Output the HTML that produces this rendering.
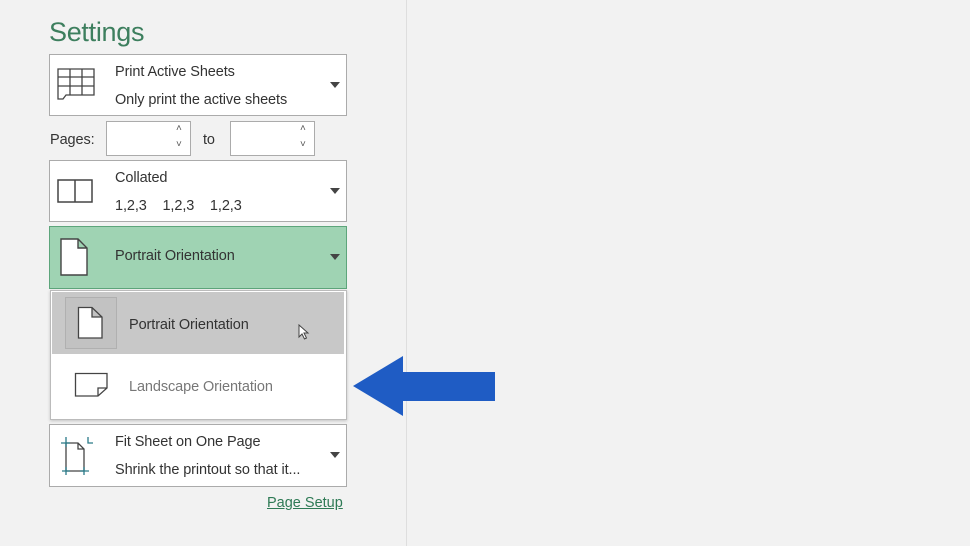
<!DOCTYPE html>
<html><head><meta charset="utf-8"><style>
*{margin:0;padding:0;box-sizing:border-box}
body{width:970px;height:546px;background:#f2f2f2;font-family:"Liberation Sans",sans-serif;color:#333;position:relative;overflow:hidden}
.a{position:absolute}
.box{position:absolute;left:49px;width:298px;background:#fff;border:1px solid #ababab}
.t{position:absolute;font-size:14.5px;color:#333;white-space:nowrap;letter-spacing:-0.1px}
.dd{position:absolute;left:280px;width:0;height:0;border-left:5px solid transparent;border-right:5px solid transparent;border-top:6px solid #444}
</style></head><body>
<div class="a" style="left:406px;top:0;width:1px;height:546px;background:#dedede"></div>
<div class="a" style="left:49px;top:17px;font-size:27px;color:#3d7f5e;letter-spacing:-0.3px">Settings</div>

<div class="box" style="top:54px;height:62px">
 <svg class="a" style="left:6px;top:12px" width="40" height="36"><g fill="none" stroke="#444" stroke-width="1.3"><path d="M2 2H38V28H10L7 32H2Z"/><path d="M2 10H38M2 19H38M14 2V28M26 2V28"/></g></svg>
 <div class="t" style="left:65px;top:9px">Print Active Sheets</div>
 <div class="t" style="left:65px;top:37px">Only print the active sheets</div>
 <div class="dd" style="top:27px"></div>
</div>

<div class="t" style="left:50px;top:132px">Pages:</div>
<div class="a" style="left:106px;top:121px;width:85px;height:35px;background:#fff;border:1px solid #ababab"></div>
<div class="a" style="left:176px;top:123px;font-size:10px;color:#555">˄</div>
<div class="a" style="left:176px;top:139px;font-size:10px;color:#555">˅</div>
<div class="t" style="left:203px;top:132px">to</div>
<div class="a" style="left:230px;top:121px;width:85px;height:35px;background:#fff;border:1px solid #ababab"></div>
<div class="a" style="left:300px;top:123px;font-size:10px;color:#555">˄</div>
<div class="a" style="left:300px;top:139px;font-size:10px;color:#555">˅</div>

<div class="box" style="top:160px;height:62px">
 <svg class="a" style="left:6px;top:17px" width="40" height="28"><g fill="none" stroke="#444" stroke-width="1.5"><rect x="2" y="2" width="34" height="22"/><path d="M19 2V24"/></g></svg>
 <div class="t" style="left:65px;top:9px">Collated</div>
 <div class="t" style="left:65px;top:37px">1,2,3&nbsp;&nbsp;&nbsp;&nbsp;1,2,3&nbsp;&nbsp;&nbsp;&nbsp;1,2,3</div>
 <div class="dd" style="top:27px"></div>
</div>

<div class="box" style="top:226px;height:63px;background:#9fd3b3;border-color:#5da57b">
 <svg class="a" style="left:9px;top:10px" width="32" height="40"><path d="M2 2H19L28 11V38H2Z M19 2V11H28" fill="#fff" stroke="#444" stroke-width="1.4"/></svg>
 <div class="t" style="left:65px;top:21px">Portrait Orientation</div>
 <div class="dd" style="top:27px"></div>
</div>

<div class="a" style="left:50px;top:290px;width:297px;height:130px;background:#fff;border:1px solid #bbb;box-shadow:0 1px 3px rgba(0,0,0,.2)"></div>
<div class="a" style="left:52px;top:292px;width:292px;height:62px;background:#c8c8c8"></div>
<div class="a" style="left:65px;top:297px;width:52px;height:52px;border:1px solid #b0b0b0;background:#c2c2c2"></div>
<svg class="a" style="left:77px;top:306px" width="28" height="34"><path d="M1.5 1.5H15L25 11V32H1.5Z M15 1.5V11H25" fill="#fff" stroke="#444" stroke-width="1.3"/></svg>
<div class="t" style="left:129px;top:317px">Portrait Orientation</div>
<svg class="a" style="left:298px;top:324px" width="12" height="16"><path d="M1 1V13L4 10L6.5 15L8.5 14L6 9H10Z" fill="#fff" stroke="#444" stroke-width="1"/></svg>
<svg class="a" style="left:74px;top:372px" width="36" height="26"><path d="M1.5 1.5H33V16L24 24H1.5Z M24 24V16H33" fill="#fff" stroke="#444" stroke-width="1.3"/></svg>
<div class="t" style="left:129px;top:379px;color:#777">Landscape Orientation</div>

<svg class="a" style="left:350px;top:354px" width="148" height="64"><path d="M3 32L53 2V18H145V47H53V62Z" fill="#1f5cc4"/></svg>

<div class="box" style="top:424px;height:63px">
 <svg class="a" style="left:8px;top:8px" width="40" height="44"><g fill="none" stroke-width="1.3"><path d="M8 10H20L26 16V38H8Z M20 10V16H26" stroke="#444" fill="#fff"/><path d="M8 4V14M3 10H12M4 38H12M8 34V42M26 34V42M22 38H31" stroke="#2a7a88"/><path d="M30 4V10H35" stroke="#2a7a88"/></g></svg>
 <div class="t" style="left:65px;top:9px">Fit Sheet on One Page</div>
 <div class="t" style="left:65px;top:37px">Shrink the printout so that it...</div>
 <div class="dd" style="top:27px"></div>
</div>

<div class="a" style="left:267px;top:495px;font-size:14.5px;color:#2e7a55;text-decoration:underline">Page Setup</div>
</body></html>
